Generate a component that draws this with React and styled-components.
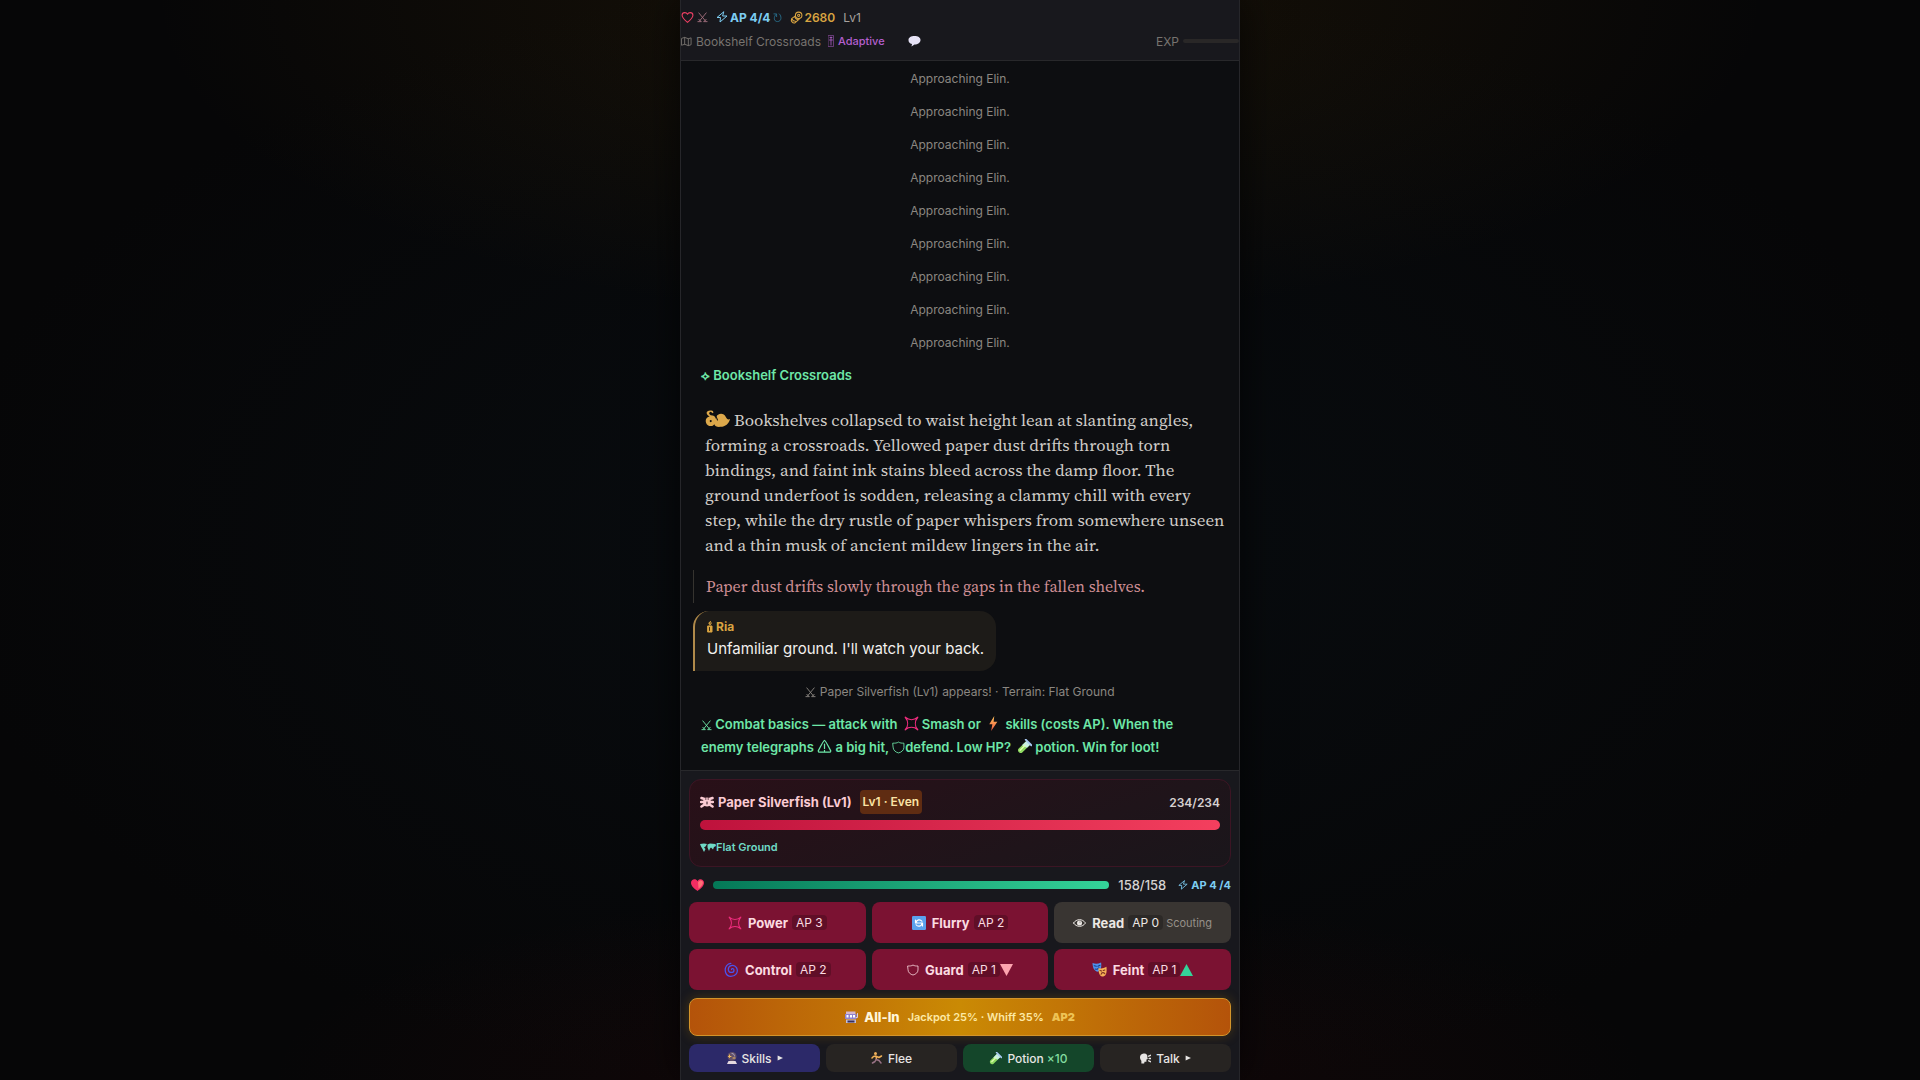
import styled, { createGlobalStyle } from "styled-components";

const GlobalStyle = createGlobalStyle`
  * {
    box-sizing: border-box;
  }

  body {
    margin: 0;
    background: #050506;
    color: #e7e5e4;
    font-family: Inter, "Noto Sans", sans-serif;
    font-size: 14px;
  }

  p, h2 {
    margin: 0;
  }

  button {
    font-family: inherit;
    border: 0;
    cursor: pointer;
  }
`;

const Page = styled.div`
  min-height: 100vh;
  display: flex;
  justify-content: center;
  background:
    radial-gradient(ellipse 42% 30% at 50% 0, rgba(120, 80, 10, 0.17), transparent),
    radial-gradient(ellipse 36% 18% at 50% 100%, rgba(110, 20, 20, 0.14), transparent),
    radial-gradient(ellipse at 50% 50%, #080b0e 20%, #060607 75%);
`;

const Phone = styled.main`
  width: 100%;
  max-width: 560px;
  height: 100vh;
  display: flex;
  flex-direction: column;
  background: #0d0e11;
  border: solid #26262a;
  border-width: 0 1px;
  box-shadow: 0 0 40px rgba(0, 0, 0, 0.7);
`;

const Icon = styled.svg`
  width: ${(p) => p.$w || 14}px;
  height: ${(p) => p.$h || p.$w || 14}px;
  margin: 0 ${(p) => p.$mx || 0}px;
  flex: none;
  fill: none;
  stroke: currentColor;
  stroke-width: 2;
  stroke-linecap: round;
  stroke-linejoin: round;
  vertical-align: -2px;
`;

const TopBar = styled.header`
  display: flex;
  flex-direction: column;
  flex: none;
  gap: 4px;
  height: 61px;
  padding-top: 7px;
  background: #18181d;
  border-bottom: 1px solid #28282b;
`;

const TopRow = styled.div`
  display: flex;
  align-items: center;
  height: 20px;
  font-size: 12px;
  color: #77736f;
`;

const Stat = styled.span`
  display: inline-flex;
  align-items: center;
  gap: ${(p) => p.$gap || 0}px;
  margin-left: ${(p) => p.$ml || 0}px;
  color: ${(p) => p.$color};
  font-size: ${(p) => p.$size || 12}px;
  font-weight: ${(p) => p.$weight || 400};
`;

const Exp = styled.div`
  display: flex;
  align-items: center;
  gap: 4px;
  margin-left: auto;
`;

const ExpTrack = styled.div`
  width: 56px;
  height: 4px;
  border-radius: 2px;
  background: #292727;
`;

const Log = styled.section`
  flex: 1;
  min-height: 0;
  overflow: hidden;
  display: flex;
  flex-direction: column;
  justify-content: flex-end;
  padding: 0 12px 6px;

  > * {
    flex-shrink: 0;
  }
`;

const SystemLine = styled.p`
  padding: 6px 0;
  line-height: 21px;
  font-size: 12px;
  text-align: center;
  color: #8b8781;
`;

const GreenLine = styled.p`
  padding: 5px 8px;
  line-height: 23px;
  font-size: 13px;
  font-weight: 600;
  color: #6ee7a8;
`;

const Story = styled.p`
  margin: 16px 0 12px;
  padding: 0 12px;
  font-family: "Source Serif 4", "Source Serif Pro", "Liberation Serif", serif;
  font-size: 17px;
  line-height: 25px;
  color: #d0ccc8;
  white-space: nowrap;
`;

const Quote = styled.p`
  margin: 0 0 8px;
  padding: 4px 12px;
  border-left: 1px solid #35332f;
  font-family: "Source Serif 4", "Source Serif Pro", "Liberation Serif", serif;
  font-size: 16px;
  line-height: 25px;
  color: #cf8f95;
`;

const Bubble = styled.div`
  align-self: flex-start;
  margin-bottom: 4px;
  padding: 6px 12px 10px;
  border-left: 2px solid #b08a4a;
  border-radius: 16px 16px 16px 0;
  background: #1d1b18;
`;

const Speaker = styled.p`
  display: flex;
  align-items: center;
  gap: 3px;
  font-size: 12px;
  line-height: 20px;
  font-weight: 700;
  color: #d9a441;
`;

const Speech = styled.p`
  font-size: 15px;
  line-height: 24px;
  color: #f3f1ee;
`;

const Battle = styled.section`
  flex: none;
  padding: 8px;
  background: #18181d;
  border-top: 1px solid #28282b;
`;

const Enemy = styled.div`
  height: 88px;
  padding: 10px;
  border: 1px solid #3c1524;
  border-radius: 12px;
  background: linear-gradient(160deg, #291018, #1a161b);
`;

const EnemyHead = styled.div`
  display: flex;
  align-items: center;
  height: 24px;
`;

const EnemyName = styled.h2`
  display: flex;
  align-items: center;
  gap: 4px;
  font-size: 13px;
  font-weight: 700;
  color: #fbcbd3;
`;

const Rank = styled.span`
  margin-left: 8px;
  padding: 0 3px;
  line-height: 24px;
  border-radius: 4px;
  background: #5f2c12;
  color: #fbe3a4;
  font-size: 12px;
  font-weight: 600;
`;

const EnemyHp = styled.span`
  margin-left: auto;
  font-size: 12px;
  font-weight: 600;
  color: #d6d0d0;
`;

const Bar = styled.div`
  flex: 1;
  height: ${(p) => p.$h}px;
  border-radius: 5px;
  background: linear-gradient(90deg, ${(p) => p.$from}, ${(p) => p.$to});
`;

const EnemyBar = styled.div`
  display: flex;
  margin: 6px 0 7px;
`;

const Terrain = styled.p`
  display: flex;
  align-items: center;
  line-height: 20px;
  font-size: 11px;
  font-weight: 600;
  color: #6fd9c6;
`;

const PlayerRow = styled.div`
  display: flex;
  align-items: center;
  gap: 9px;
  height: 35px;
  padding-left: 2px;
`;

const PlayerHp = styled.span`
  font-size: 13px;
  font-weight: 500;
  color: #d6d3d1;
`;

const Actions = styled.div`
  display: grid;
  grid-template-columns: repeat(3, 1fr);
  gap: 6px;
`;

const Action = styled.button`
  display: flex;
  align-items: center;
  justify-content: center;
  height: 41px;
  padding: 0;
  border-radius: 8px;
  background: ${(p) => (p.$muted ? "#393532" : "#7b1232")};
  color: ${(p) => (p.$muted ? "#ece8e4" : "#fbdbe1")};
  font-size: 13px;
  font-weight: 700;
`;

const ActionName = styled.span`
  margin: 0 4px 0 6px;
`;

const Cost = styled.span`
  padding: 0 4px;
  line-height: 15px;
  border-radius: 4px;
  background: rgba(0, 0, 0, 0.22);
  font-size: 12px;
  font-weight: 400;
`;

const Hint = styled.span`
  margin-left: 3px;
  font-size: 11px;
  font-weight: 400;
  color: #969089;
`;

const AllIn = styled.button`
  display: flex;
  align-items: center;
  justify-content: center;
  gap: 8px;
  width: 100%;
  height: 38px;
  margin: 8px 0;
  border: 1px solid #d3942a;
  border-radius: 8px;
  background: linear-gradient(90deg, #b4530a, #ca8a04 50%, #b4530a);
  box-shadow: 0 0 12px rgba(202, 138, 4, 0.28);
  color: #fde9a5;
  font-size: 11px;
  font-weight: 600;

  strong {
    margin-left: -2px;
    font-size: 13px;
    font-weight: 800;
    color: #fff6dc;
  }

  b {
    font-size: 11px;
    color: #eec355;
  }
`;

const Menu = styled.nav`
  display: grid;
  grid-template-columns: repeat(4, 1fr);
  gap: 6px;
`;

const MenuButton = styled.button`
  display: flex;
  align-items: center;
  justify-content: center;
  gap: 5px;
  height: 28px;
  padding: 0;
  border-radius: 8px;
  background: ${(p) => p.$bg};
  color: #e7e5e4;
  font-size: 12px;
  font-weight: 500;

  em {
    margin-left: -2px;
    font-style: normal;
    color: #83dca0;
  }
`;

const Heart = () => (
  <Icon viewBox="0 0 24 24" $w={13}>
    <path d="M12 21C7 17 2 13 2 8c0-3 2-5 5-5 2 0 4 1 5 3 1-2 3-3 5-3 3 0 5 2 5 5 0 5-5 9-10 13z" />
  </Icon>
);

const Swords = ({ size = 12 }) => (
  <Icon viewBox="0 0 24 24" $w={size}>
    <path d="M4 2l14 17M20 2L6 19M2 21h7M15 21h7M4 16l4 4M20 16l-4 4" />
  </Icon>
);

const Bolt = ({ size = 12 }) => (
  <Icon viewBox="0 0 24 24" $w={size}>
    <path d="M15 2L2 13h7l-1 9 14-12h-8z" />
  </Icon>
);

const Reload = () => (
  <Icon viewBox="0 0 20 24" $w={9} $h={11}>
    <path d="M2 4h6v6M7 5C1 10 1 21 10 21s10-12 4-17" />
  </Icon>
);

const Coins = () => (
  <Icon viewBox="0 0 24 24" $w={13}>
    <circle cx="16" cy="8" r="6" />
    <circle cx="16" cy="8" r="2" />
    <path d="M10 9l-7 5c-2 5 2 9 6 8l8-7M4 15c1 3 3 4 6 4M9 11c1 3 3 4 5 5" />
  </Icon>
);

const MapFold = () => (
  <Icon viewBox="0 0 24 24" $w={11}>
    <path d="M2 5l6-2 8 3 6-2v15l-6 2-8-3-6 2zM8 3v15M16 6v15" />
  </Icon>
);

const Slider = () => (
  <Icon viewBox="0 0 12 24" $w={6} $h={12}>
    <path d="M1 1h10v22H1z" strokeWidth="1" />
    <path d="M6 4v16M3 10h6M4 5h4" strokeWidth="1.6" />
  </Icon>
);

const Balloon = () => (
  <Icon viewBox="0 0 26 24" $w={13} $h={12}>
    <path d="M13 2c7 0 12 3 12 8s-5 9-12 9l-6 4 1-5c-5-1-7-4-7-8 0-5 5-8 12-8z" fill="#e6e2f6" stroke="none" />
  </Icon>
);

const Burst = ({ size = 14, mx }) => (
  <Icon viewBox="0 0 24 24" $w={size} $mx={mx} color="#ee2c7d">
    <path d="M2 2c6 5 14 5 20 0-5 6-5 14 0 20-6-5-14-5-20 0 5-6 5-14 0-20z" />
  </Icon>
);

const Flash = () => (
  <Icon viewBox="0 0 16 24" $w={10} $h={15} $mx={4}>
    <defs>
      <linearGradient id="flash" x2="0" y2="1">
        <stop stopColor="#ffc65c" />
        <stop offset="1" stopColor="#ef5540" />
      </linearGradient>
    </defs>
    <path d="M10 0L2 13h5L5 24 15 9h-6z" fill="url(#flash)" stroke="none" />
  </Icon>
);

const Warn = () => (
  <Icon viewBox="0 0 24 24" $w={15}>
    <path d="M12 2c1 0 2 1 10 17 0 2-1 2-2 2H4c-1 0-2 0-2-2C10 3 11 2 12 2zM12 8v7M12 18v1" />
  </Icon>
);

const Shield = ({ size = 12 }) => (
  <Icon viewBox="0 0 24 24" $w={size}>
    <path d="M2 4c4 0 7 0 10-2 3 2 6 2 10 2v8c0 5-5 9-10 10C7 21 2 17 2 12z" strokeWidth="1.6" />
  </Icon>
);

const Tube = ({ size = 14, mx }) => (
  <Icon viewBox="0 0 24 24" $w={size} $mx={mx}>
    <path d="M15 3l6 6L8 22c-3 2-8-2-6-6z" fill="#8fda62" stroke="none" />
    <path d="M15 3l6 6-5 5-8-4z" fill="#c8eee4" stroke="none" />
    <path d="M14 1l9 9" stroke="#a9c9f2" strokeWidth="3" />
    <path d="M5 18l8-8" stroke="#e3ffb2" strokeWidth="2" />
  </Icon>
);

const Floral = () => (
  <Icon viewBox="0 0 48 34" $w={25} $h={18}>
    <g fill="#dca84b" stroke="none">
      <path d="M14 1C6-1 1 3 4 8c1 2 3 3 5 4-6 1-9 6-7 12 2 7 12 9 16 3 1 4 6 6 12 5 9 0 16-6 18-15-4 2-6 0-8-4-3-6-10-8-15-4-3 2-4 5-4 8-1-5-5-7-10-7-4-2-4-6 0-7l4 3c2-1 1-4-1-5z" />
    </g>
    <circle cx="11" cy="21" r="2" fill="#0d0e11" stroke="none" />
    <path d="M21 12l3 7" stroke="#0d0e11" />
  </Icon>
);

const Candle = () => (
  <Icon viewBox="0 0 12 24" $w={6} $h={12}>
    <path d="M7 1c-4 2-4 4-2 6M8 3c1 2 0 4-2 5M2 10h8v12H2z" fill="currentColor" />
    <path d="M5 13v6" stroke="#3a2a10" />
  </Icon>
);

const Bug = () => (
  <Icon viewBox="0 0 28 24" $w={14} $h={12}>
    <path d="M3 4l6 2M25 4l-6 2M2 12h6M26 12h-6M3 21l6-4M25 21l-6-4" strokeWidth="5" />
    <ellipse cx="14" cy="12" rx="8" ry="9" fill="currentColor" stroke="none" />
    <path d="M11 6h1M16 6h1M14 12v4" stroke="#291018" />
  </Icon>
);

const World = () => (
  <Icon viewBox="0 0 32 18" $w={16} $h={9}>
    <path d="M0 2l8-1 6 1-3 5-3 2 3 3-3 6-3-6-3-5zM15 3l5-2 11 1 1 4-4 2-2 5-4-4-2 2-2 5-3-7z" fill="currentColor" stroke="none" />
  </Icon>
);

const RedHeart = () => (
  <Icon viewBox="0 0 24 22" $w={13} $h={12}>
    <path d="M12 22C6 18 0 13 0 7c0-7 9-9 12-3 3-6 12-4 12 3 0 6-6 11-12 15z" fill="#f32d62" stroke="none" />
    <path d="M13 6c3-5 9-4 9 1 0 4-4 7-8 11z" fill="#ff7177" stroke="none" />
  </Icon>
);

const Refresh = () => (
  <Icon viewBox="0 0 24 24" $w={14}>
    <rect width="24" height="24" rx="2" fill="#5aa2ee" stroke="none" />
    <path d="M17 9c-3-4-9-3-10 2M6 7v5h5M7 15c3 4 9 3 10-2M18 17v-5h-5" stroke="#fff" />
  </Icon>
);

const Eye = () => (
  <Icon viewBox="0 0 26 16" $w={13} $h={8}>
    <path d="M1 8c6-9 18-9 24 0-6 9-18 9-24 0z" strokeWidth="2" />
    <circle cx="13" cy="8" r="5" fill="currentColor" stroke="none" />
    <circle cx="14" cy="6" r="1" fill="#393532" stroke="none" />
  </Icon>
);

const Cyclone = () => (
  <Icon viewBox="0 0 24 24" $w={15} color="#4a55ed">
    <path d="M12 12c0-2 4-2 4 1 0 5-8 5-9 0-1-8 9-10 13-4 4 8-2 14-9 14C2 23 0 12 4 6c2-3 4-4 7-4" />
  </Icon>
);

const Masks = () => (
  <Icon viewBox="0 0 28 28" $w={15}>
    <path d="M1 2c5 2 10 2 16-1 1 9 0 16-7 17C4 17 1 10 1 2z" fill="#4f91ec" stroke="none" />
    <path d="M4 7l4 1M11 8l4-2M6 13c3 1 5 1 7-2" stroke="#183d84" />
    <path d="M12 11c5 2 9 1 15-2 1 10 0 17-6 18-7 0-9-7-9-16z" fill="#f7b057" stroke="none" />
    <path d="M15 16l3 1M21 16l3-1M17 23c1-4 5-4 7-1" stroke="#7e3422" />
  </Icon>
);

const Slot = () => (
  <Icon viewBox="0 0 26 24" $w={13} $h={12}>
    <path d="M2 1h19v5H2z" fill="#d5b6ce" stroke="none" />
    <path d="M0 6h23v10H0z" fill="#8f83cf" stroke="none" />
    <path d="M3 8h4v5H3zM10 8h4v5h-4zM16 8h4v5h-4z" fill="#fff" stroke="none" />
    <path d="M2 17h20v7H2z" fill="#c5bfd9" stroke="none" />
    <path d="M5 19h14v4H5z" fill="#39305d" stroke="none" />
    <path d="M25 5v8h-3" stroke="#d6cce6" />
  </Icon>
);

const Crystal = () => (
  <Icon viewBox="0 0 20 24" $w={10} $h={12}>
    <circle cx="10" cy="9" r="9" fill="#635067" stroke="none" />
    <path d="M3 18h14l3 6H0z" fill="#e4d8df" stroke="none" />
    <path d="M3 9h5M5 6v5M12 12h4" stroke="#f0bb5e" />
    <path d="M10 3c4 0 5 3 5 5" stroke="#a9a3c1" />
  </Icon>
);

const Runner = () => (
  <Icon viewBox="0 0 24 24" $w={12}>
    <circle cx="9" cy="3" r="3" fill="#efb05b" stroke="none" />
    <path d="M10 8l1 7M10 8L5 9l-3 3M11 9l5 2 5-3" stroke="#f0b057" strokeWidth="3" />
    <path d="M11 15l5 2 4 5M10 15l-2 4-5 3" stroke="#987285" strokeWidth="3" />
  </Icon>
);

const Talk = () => (
  <Icon viewBox="0 0 24 24" $w={11}>
    <path d="M8 1c7-1 9 5 8 9l1 3-3 1v5h-4l-1 4H3v-6C-2 11-1 2 8 1z" fill="currentColor" stroke="none" />
    <path d="M19 7l4-2M20 12h4M19 17l4 2" strokeWidth="3" />
  </Icon>
);

const Arrow = () => (
  <Icon viewBox="0 0 10 10" $w={6}>
    <path d="M1 1l9 4-9 4z" fill="currentColor" stroke="none" />
  </Icon>
);

const Triangle = ({ down }) => (
  <Icon viewBox="0 0 24 22" $w={13} $h={12} color={down ? "#fda4af" : "#34d399"}>
    <path d={down ? "M0 0h24L12 22z" : "M0 22h24L12 0z"} fill="currentColor" stroke="none" />
  </Icon>
);

const approaches = Array.from({ length: 9 }, (_, i) => i);

const actions = [
  { icon: <Burst />, name: "Power", cost: 3 },
  { icon: <Refresh />, name: "Flurry", cost: 2 },
  { icon: <Eye />, name: "Read", cost: 0, muted: true, extra: <Hint>Scouting</Hint> },
  { icon: <Cyclone />, name: "Control", cost: 2 },
  { icon: <Shield />, name: "Guard", cost: 1, extra: <Triangle down /> },
  { icon: <Masks />, name: "Feint", cost: 1, extra: <Triangle /> },
];

const App = () => {
  return (
    <Page>
      <GlobalStyle />
      <Phone>
        <TopBar>
          <TopRow>
            <Stat $color="#ee3f63"><Heart /></Stat>
            <Stat $color="#a4717f" $ml={3}><Swords size={11} /></Stat>
            <Stat $color="#7dcdf2" $weight={700} $gap={2} $ml={8}><Bolt /> AP 4/4</Stat>
            <Stat $color="#286f8d" $ml={3}><Reload /></Stat>
            <Stat $color="#d9a441" $weight={600} $gap={1} $ml={8}><Coins /> 2680</Stat>
            <Stat $color="#a8a29e" $ml={8}>Lv1</Stat>
          </TopRow>
          <TopRow>
            <Stat $gap={4}><MapFold /> Bookshelf Crossroads</Stat>
            <Stat $color="#b45fcf" $size={11} $gap={4} $ml={7} $weight={500}><Slider /> Adaptive</Stat>
            <Stat $ml={23}><Balloon /></Stat>
            <Exp>EXP <ExpTrack /></Exp>
          </TopRow>
        </TopBar>

        <Log>
          {approaches.map((n) => (
            <SystemLine key={n}>Approaching Elin.</SystemLine>
          ))}
          <GreenLine>⟡ Bookshelf Crossroads</GreenLine>
          <Story>
            <Floral /> Bookshelves collapsed to waist height lean at slanting angles,<br />
            forming a crossroads. Yellowed paper dust drifts through torn<br />
            bindings, and faint ink stains bleed across the damp floor. The<br />
            ground underfoot is sodden, releasing a clammy chill with every<br />
            step, while the dry rustle of paper whispers from somewhere unseen<br />
            and a thin musk of ancient mildew lingers in the air.
          </Story>
          <Quote>Paper dust drifts slowly through the gaps in the fallen shelves.</Quote>
          <Bubble>
            <Speaker><Candle /> Ria</Speaker>
            <Speech>Unfamiliar ground. I'll watch your back.</Speech>
          </Bubble>
          <SystemLine><Swords size={11} /> Paper Silverfish (Lv1) appears! · Terrain: Flat Ground</SystemLine>
          <GreenLine>
            <Swords size={11} /> Combat basics — attack with <Burst size={15} mx={3} />Smash or <Flash /> skills (costs AP). When the<br />
            enemy telegraphs <Warn /> a big hit, <Shield size={13} />defend. Low HP? <Tube size={15} mx={3} />potion. Win for loot!
          </GreenLine>
        </Log>

        <Battle>
          <Enemy>
            <EnemyHead>
              <EnemyName><Bug /> Paper Silverfish (Lv1)</EnemyName>
              <Rank>Lv1 · Even</Rank>
              <EnemyHp>234/234</EnemyHp>
            </EnemyHead>
            <EnemyBar><Bar $h={10} $from="#be123c" $to="#f43f5e" /></EnemyBar>
            <Terrain><World />Flat Ground</Terrain>
          </Enemy>
          <PlayerRow>
            <RedHeart />
            <Bar $h={8} $from="#047857" $to="#34d399" />
            <PlayerHp>158/158</PlayerHp>
            <Stat $color="#7dcdf2" $size={11} $weight={700} $gap={3} $ml={3}><Bolt size={10} /> AP 4 /4</Stat>
          </PlayerRow>
          <Actions>
            {actions.map((a) => (
              <Action key={a.name} type="button" $muted={a.muted}>
                {a.icon}
                <ActionName>{a.name}</ActionName>
                <Cost>AP {a.cost}</Cost>
                {a.extra}
              </Action>
            ))}
          </Actions>
          <AllIn type="button">
            <Slot />
            <strong>All-In</strong>
            <span>Jackpot 25% · Whiff 35%</span>
            <b>AP2</b>
          </AllIn>
          <Menu>
            <MenuButton type="button" $bg="#2c2969"><Crystal /> Skills <Arrow /></MenuButton>
            <MenuButton type="button" $bg="#272422"><Runner /> Flee</MenuButton>
            <MenuButton type="button" $bg="#14462a"><Tube size={13} /> Potion <em>×10</em></MenuButton>
            <MenuButton type="button" $bg="#272422"><Talk /> Talk <Arrow /></MenuButton>
          </Menu>
        </Battle>
      </Phone>
    </Page>
  );
};

export default App;
